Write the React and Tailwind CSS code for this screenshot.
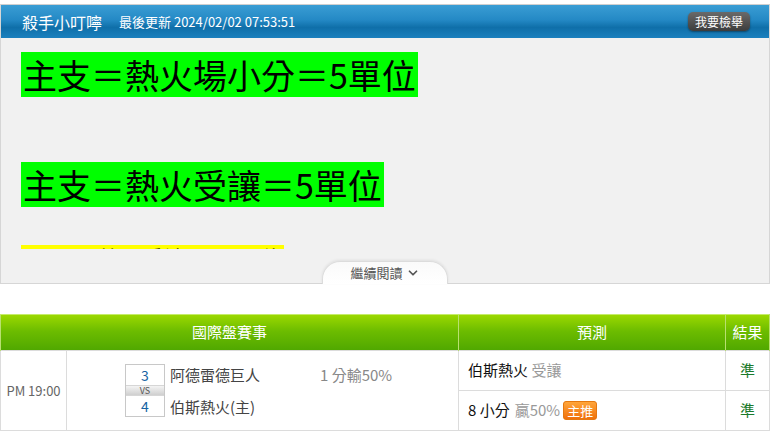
import { ChevronDown } from 'lucide-react'

const font = { fontFamily: '"Noto Sans CJK TC", "Liberation Sans", sans-serif' }

export default function App() {
  return (
    <div className="w-[775px] h-[439px] bg-white overflow-hidden" style={font}>
      {/* notice panel */}
      <div className="mt-1 w-[770px] border border-[#d6d6d6] border-t-[#cfcfcf]">
        <div className="h-[33px] flex items-center px-[21px] bg-[linear-gradient(to_bottom,#3a9dd4,#2489c5_45%,#0f6fa9_68%,#1b80be)]">
          <span className="text-white text-[16px] leading-none">殺手小叮嚀</span>
          <span className="text-white text-[13px] leading-none ml-[17px]">最後更新 2024/02/02 07:53:51</span>
          <button className="ml-auto mr-[-2px] h-[19px] px-[7px] rounded-[5px] bg-[linear-gradient(to_bottom,#6a6a6a,#3c3c3c)] text-white text-[12px] leading-none shadow-[0_1px_2px_rgba(0,0,0,0.4)]">
            我要檢舉
          </button>
        </div>
        <div className="bg-[#f1f1f1]">
          <div className="h-[211px] overflow-hidden px-[20px] pt-[14px]">
            <div className="inline-block bg-[#00ff00] text-black text-[34px] leading-[45px] px-[2px]">主支＝熱火場小分＝5單位</div>
            <div className="h-[65px]" />
            <div className="inline-block bg-[#00ff00] text-black text-[34px] leading-[45px] px-[2px]">主支＝熱火受讓＝5單位</div>
            <div className="h-[38px]" />
            <div className="inline-block bg-[#ffff00] text-black text-[22px] leading-[24px] px-[2px]">1.5星＝熱火受讓＝1.5單位</div>
          </div>
          <div className="h-[34px] flex justify-center items-end">
            <div className="-mb-px w-[126px] h-[23px] rounded-t-[18px] border-t border-x border-[#dcdcdc] bg-[linear-gradient(to_bottom,#fafafa,#ffffff)] shadow-[0_-1px_3px_rgba(0,0,0,0.08)] flex items-center justify-center gap-[3px] text-[#555] text-[13px]">
              <span>繼續閱讀</span>
              <ChevronDown className="w-[14px] h-[14px]" strokeWidth={3} />
            </div>
          </div>
        </div>
      </div>

      {/* match table */}
      <table className="mt-[30px] w-[770px] border-collapse text-[15px]">
        <thead>
          <tr className="h-[36px] bg-[linear-gradient(to_bottom,#9bd800,#6cbc00_45%,#4fa700)] text-white">
            <th colSpan={2} className="font-normal border-l border-[#b8e070] border-t border-t-[#c5ec6a]">國際盤賽事</th>
            <th className="w-[267px] font-normal border-l border-[#b8e070] border-t border-t-[#c5ec6a]">預測</th>
            <th className="w-[44px] font-normal border-x border-[#b8e070] border-t border-t-[#c5ec6a]">結果</th>
          </tr>
        </thead>
        <tbody>
          <tr className="h-[40px]">
            <td rowSpan={2} className="w-[66px] border border-[#dcdcdc] text-center text-[13px] text-[#666]">PM 19:00</td>
            <td rowSpan={2} className="border border-[#dcdcdc]">
              <div className="flex items-center pl-[58px]">
                <div className="w-[40px] border border-[#c8c8c8] flex flex-col text-center">
                  <div className="h-[20px] flex items-center justify-center text-[#1763a3] text-[14px] leading-none">3</div>
                  <div className="h-[11px] flex items-center justify-center text-[9px] leading-none text-[#555] bg-[linear-gradient(to_bottom,#f4f4f4,#cfcfcf)] border-y border-[#d6d6d6]">VS</div>
                  <div className="h-[20px] flex items-center justify-center text-[#1763a3] text-[14px] leading-none">4</div>
                </div>
                <div className="flex flex-col ml-[5px] text-[#444] gap-[10px] leading-[22px]">
                  <div className="flex">
                    <span className="w-[150px]">阿德雷德巨人</span>
                    <span className="text-[#888]">1 分輸50%</span>
                  </div>
                  <span>伯斯熱火(主)</span>
                </div>
              </div>
            </td>
            <td className="border border-[#dcdcdc] pl-[9px] text-[#111]">
              伯斯熱火 <span className="text-[#999]">受讓</span>
            </td>
            <td className="border border-[#dcdcdc] text-center text-[#1b7a2b]">準</td>
          </tr>
          <tr className="h-[40px]">
            <td className="border border-[#dcdcdc] pl-[9px] text-[#111]">
              <div className="flex items-center">
                <span>8 小分</span>
                <span className="text-[#999] ml-[5px]">贏50%</span>
                <span className="ml-[3px] h-[19px] px-[3px] rounded-[3px] bg-[linear-gradient(to_bottom,#ffa53a,#f0700a)] border border-[#e4780f] text-white text-[13px] leading-[17px]">主推</span>
              </div>
            </td>
            <td className="border border-[#dcdcdc] text-center text-[#1b7a2b]">準</td>
          </tr>
        </tbody>
      </table>
    </div>
  )
}
